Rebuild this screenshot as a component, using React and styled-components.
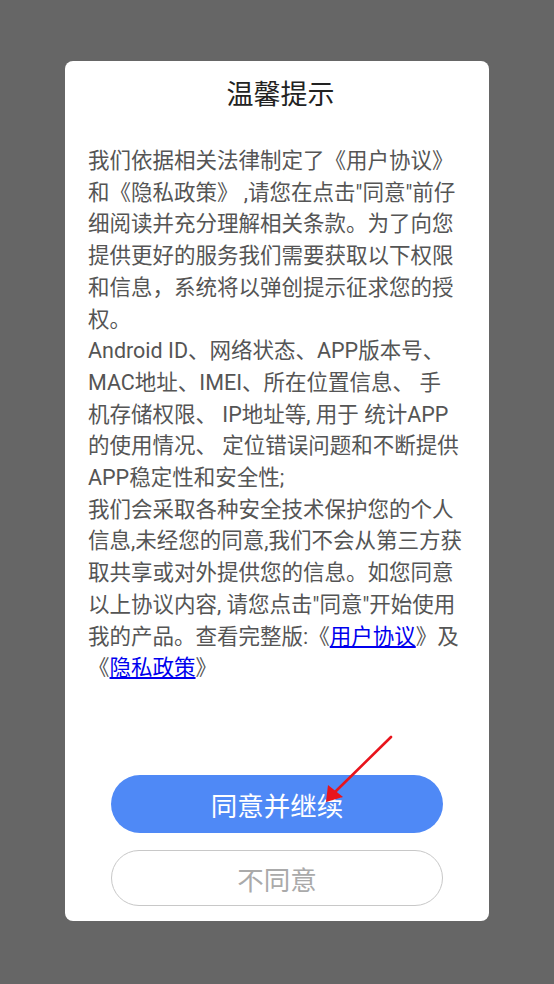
import React from 'react';
import styled, { createGlobalStyle } from 'styled-components';

const GlobalStyle = createGlobalStyle`
  html, body {
    margin: 0;
    padding: 0;
    background: #666666;
  }
  body {
    font-family: Roboto, "Noto Sans CJK SC", sans-serif;
  }
`;

const lines = [
  '我们依据相关法律制定了《用户协议》',
  '和《隐私政策》 ,请您在点击"同意"前仔',
  '细阅读并充分理解相关条款。为了向您',
  '提供更好的服务我们需要获取以下权限',
  '和信息，系统将以弹创提示征求您的授',
  '权。',
  'Android ID、网络状态、APP版本号、',
  'MAC地址、IMEI、所在位置信息、 手',
  '机存储权限、 IP地址等, 用于 统计APP',
  '的使用情况、 定位错误问题和不断提供',
  'APP稳定性和安全性;',
  '我们会采取各种安全技术保护您的个人',
  '信息,未经您的同意,我们不会从第三方获',
  '取共享或对外提供您的信息。如您同意',
  '以上协议内容, 请您点击"同意"开始使用',
];

const App = () => {
  return (
    <>
      <GlobalStyle />
      <Screen>
        <Dialog>
          <Title>温馨提示</Title>
          <Body>
            {lines.map((text, i) => (
              <Line key={i}>{text}</Line>
            ))}
            <Line>
              我的产品。查看完整版:《<Link href="#">用户协议</Link>》及
            </Line>
            <Line>
              《<Link href="#">隐私政策</Link>》
            </Line>
          </Body>
          <Actions>
            <PillButton $primary>同意并继续</PillButton>
            <PillButton>不同意</PillButton>
          </Actions>
          {/* red pointer drawn over the agree button */}
          <Arrow width="80" height="74" viewBox="0 0 80 74">
            <line x1="71" y1="2" x2="15" y2="57" stroke="#e8141c" strokeWidth="2.6" strokeLinecap="round" />
            <polygon points="6,67 8,50 23,62" fill="#e8141c" />
          </Arrow>
        </Dialog>
      </Screen>
    </>
  );
};

export default App;

const Screen = styled.div`
  width: 554px;
  height: 984px;
  box-sizing: border-box;
  padding: 61px 65px 0;
  background: #666666;
`;

const Dialog = styled.div`
  position: relative;
  width: 424px;
  height: 860px;
  box-sizing: border-box;
  background: #ffffff;
  border-radius: 8px;
  padding: 14px 20px 15px 23px;
  display: flex;
  flex-direction: column;
`;

const Title = styled.div`
  height: 40px;
  line-height: 40px;
  text-align: center;
  font-size: 27px;
  color: #222222;
  padding-left: 4px;
`;

const Body = styled.div`
  margin-top: 30px;
  flex: 1;
  font-size: 21.5px;
  line-height: 31.7px;
  color: #555555;
`;

const Line = styled.div`
  white-space: pre;
`;

const Link = styled.a`
  color: #0000ee;
  text-decoration: underline;
  text-underline-offset: 2px;
`;

const Actions = styled.div`
  display: flex;
  flex-direction: column;
  align-items: center;
  gap: 17px;
  padding-right: 3px;
`;

const PillButton = styled.button`
  width: 332px;
  height: ${(p) => (p.$primary ? '58px' : '56px')};
  border-radius: 29px;
  box-sizing: border-box;
  border: ${(p) => (p.$primary ? 'none' : '1.5px solid #c8c8c8')};
  background: ${(p) => (p.$primary ? '#4f89f6' : '#ffffff')};
  color: ${(p) => (p.$primary ? '#ffffff' : '#aaaaaa')};
  font-family: Roboto, "Noto Sans CJK SC", sans-serif;
  font-size: 26.5px;
  padding: 0;
  cursor: pointer;
`;

const Arrow = styled.svg`
  position: absolute;
  left: 255px;
  top: 674px;
`;
